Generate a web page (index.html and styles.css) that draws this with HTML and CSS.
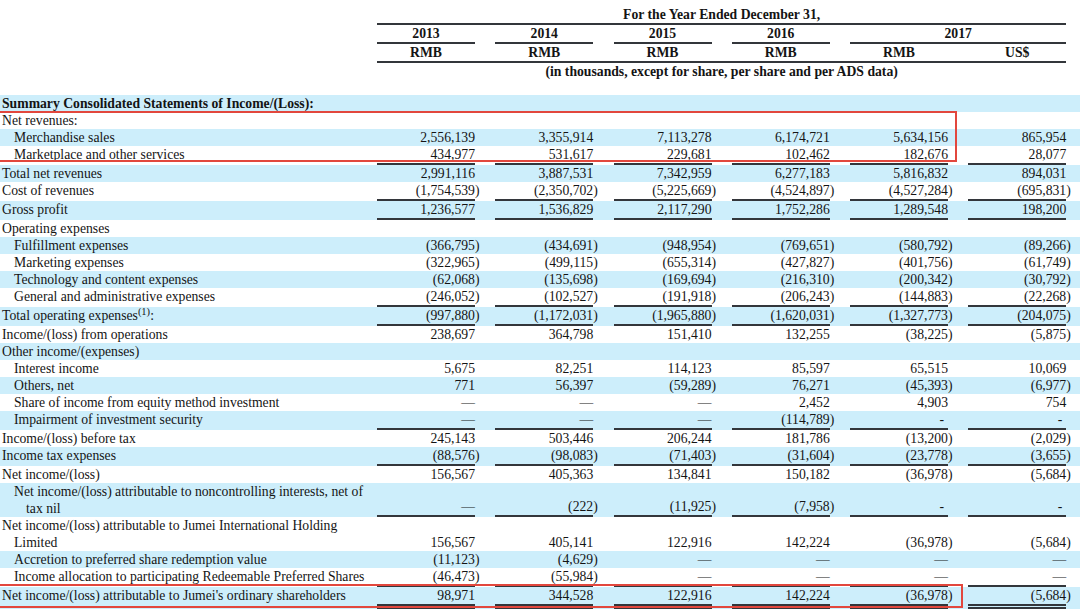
FILE: index.html
```html
<!DOCTYPE html>
<html>
<head>
<meta charset="utf-8">
<link rel="stylesheet" href="styles.css">
</head>
<body>
<div class="page">
  <div class="head">
    <div class="hrow"><div class="c title">For the Year Ended December 31,</div></div>
    <div class="hrow years">
      <div class="c first">2013</div><div class="c">2014</div><div class="c">2015</div><div class="c">2016</div><div class="c y17">2017</div>
    </div>
    <div class="hrow cur">
      <div class="c first">RMB</div><div class="c">RMB</div><div class="c">RMB</div><div class="c">RMB</div><div class="c">RMB</div><div class="c">US$</div>
    </div>
    <div class="hrow"><div class="c title note">(in thousands, except for share, per share and per ADS data)</div></div>
  </div>

  <div class="body">
    <div class="row b"><div class="lab bold">Summary Consolidated Statements of Income/(Loss):</div></div>
    <div class="grp">
      <div class="row"><div class="lab">Net revenues:</div></div>
      <div class="row b"><div class="lab l1">Merchandise sales</div><div class="v">2,556,139</div><div class="v">3,355,914</div><div class="v">7,113,278</div><div class="v">6,174,721</div><div class="v">5,634,156</div><div class="v">865,954</div></div>
      <div class="row ul"><div class="lab l1">Marketplace and other services</div><div class="v">434,977</div><div class="v">531,617</div><div class="v">229,681</div><div class="v">102,462</div><div class="v">182,676</div><div class="v">28,077</div></div>
      <div class="redbox box1"></div>
    </div>
    <div class="row b"><div class="lab">Total net revenues</div><div class="v">2,991,116</div><div class="v">3,887,531</div><div class="v">7,342,959</div><div class="v">6,277,183</div><div class="v">5,816,832</div><div class="v">894,031</div></div>
    <div class="row ul"><div class="lab">Cost of revenues</div><div class="v"><span class="p">(1,754,539)</span></div><div class="v"><span class="p">(2,350,702)</span></div><div class="v"><span class="p">(5,225,669)</span></div><div class="v"><span class="p">(4,524,897)</span></div><div class="v"><span class="p">(4,527,284)</span></div><div class="v"><span class="p">(695,831)</span></div></div>
    <div class="row b ul"><div class="lab">Gross profit</div><div class="v">1,236,577</div><div class="v">1,536,829</div><div class="v">2,117,290</div><div class="v">1,752,286</div><div class="v">1,289,548</div><div class="v">198,200</div></div>
    <div class="row"><div class="lab">Operating expenses</div></div>
    <div class="row b"><div class="lab l1">Fulfillment expenses</div><div class="v"><span class="p">(366,795)</span></div><div class="v"><span class="p">(434,691)</span></div><div class="v"><span class="p">(948,954)</span></div><div class="v"><span class="p">(769,651)</span></div><div class="v"><span class="p">(580,792)</span></div><div class="v"><span class="p">(89,266)</span></div></div>
    <div class="row"><div class="lab l1">Marketing expenses</div><div class="v"><span class="p">(322,965)</span></div><div class="v"><span class="p">(499,115)</span></div><div class="v"><span class="p">(655,314)</span></div><div class="v"><span class="p">(427,827)</span></div><div class="v"><span class="p">(401,756)</span></div><div class="v"><span class="p">(61,749)</span></div></div>
    <div class="row b"><div class="lab l1">Technology and content expenses</div><div class="v"><span class="p">(62,068)</span></div><div class="v"><span class="p">(135,698)</span></div><div class="v"><span class="p">(169,694)</span></div><div class="v"><span class="p">(216,310)</span></div><div class="v"><span class="p">(200,342)</span></div><div class="v"><span class="p">(30,792)</span></div></div>
    <div class="row ul"><div class="lab l1">General and administrative expenses</div><div class="v"><span class="p">(246,052)</span></div><div class="v"><span class="p">(102,527)</span></div><div class="v"><span class="p">(191,918)</span></div><div class="v"><span class="p">(206,243)</span></div><div class="v"><span class="p">(144,883)</span></div><div class="v"><span class="p">(22,268)</span></div></div>
    <div class="row b ul"><div class="lab">Total operating expenses<sup class="fn">(1)</sup>:</div><div class="v"><span class="p">(997,880)</span></div><div class="v"><span class="p">(1,172,031)</span></div><div class="v"><span class="p">(1,965,880)</span></div><div class="v"><span class="p">(1,620,031)</span></div><div class="v"><span class="p">(1,327,773)</span></div><div class="v"><span class="p">(204,075)</span></div></div>
    <div class="row"><div class="lab">Income/(loss) from operations</div><div class="v">238,697</div><div class="v">364,798</div><div class="v">151,410</div><div class="v">132,255</div><div class="v"><span class="p">(38,225)</span></div><div class="v"><span class="p">(5,875)</span></div></div>
    <div class="row b"><div class="lab">Other income/(expenses)</div></div>
    <div class="row"><div class="lab l1">Interest income</div><div class="v">5,675</div><div class="v">82,251</div><div class="v">114,123</div><div class="v">85,597</div><div class="v">65,515</div><div class="v">10,069</div></div>
    <div class="row b"><div class="lab l1">Others, net</div><div class="v">771</div><div class="v">56,397</div><div class="v"><span class="p">(59,289)</span></div><div class="v">76,271</div><div class="v"><span class="p">(45,393)</span></div><div class="v"><span class="p">(6,977)</span></div></div>
    <div class="row"><div class="lab l1">Share of income from equity method investment</div><div class="v">—</div><div class="v">—</div><div class="v">—</div><div class="v">2,452</div><div class="v">4,903</div><div class="v">754</div></div>
    <div class="row b ul"><div class="lab l1">Impairment of investment security</div><div class="v">—</div><div class="v">—</div><div class="v">—</div><div class="v"><span class="p">(114,789)</span></div><div class="v h">-</div><div class="v h">-</div></div>
    <div class="row"><div class="lab">Income/(loss) before tax</div><div class="v">245,143</div><div class="v">503,446</div><div class="v">206,244</div><div class="v">181,786</div><div class="v"><span class="p">(13,200)</span></div><div class="v"><span class="p">(2,029)</span></div></div>
    <div class="row b ul"><div class="lab">Income tax expenses</div><div class="v"><span class="p">(88,576)</span></div><div class="v"><span class="p">(98,083)</span></div><div class="v"><span class="p">(71,403)</span></div><div class="v"><span class="p">(31,604)</span></div><div class="v"><span class="p">(23,778)</span></div><div class="v"><span class="p">(3,655)</span></div></div>
    <div class="row"><div class="lab">Net income/(loss)</div><div class="v">156,567</div><div class="v">405,363</div><div class="v">134,841</div><div class="v">150,182</div><div class="v"><span class="p">(36,978)</span></div><div class="v"><span class="p">(5,684)</span></div></div>
    <div class="row b ul"><div class="lab l1">Net income/(loss) attributable to noncontrolling interests, net of tax nil</div><div class="v">—</div><div class="v"><span class="p">(222)</span></div><div class="v"><span class="p">(11,925)</span></div><div class="v"><span class="p">(7,958)</span></div><div class="v h">-</div><div class="v h">-</div></div>
    <div class="row"><div class="lab">Net income/(loss) attributable to Jumei International Holding Limited</div><div class="v">156,567</div><div class="v">405,141</div><div class="v">122,916</div><div class="v">142,224</div><div class="v"><span class="p">(36,978)</span></div><div class="v"><span class="p">(5,684)</span></div></div>
    <div class="row b"><div class="lab l1">Accretion to preferred share redemption value</div><div class="v"><span class="p">(11,123)</span></div><div class="v"><span class="p">(4,629)</span></div><div class="v">—</div><div class="v">—</div><div class="v">—</div><div class="v">—</div></div>
    <div class="row ul"><div class="lab l1">Income allocation to participating Redeemable Preferred Shares</div><div class="v"><span class="p">(46,473)</span></div><div class="v"><span class="p">(55,984)</span></div><div class="v">—</div><div class="v">—</div><div class="v">—</div><div class="v">—</div></div>
    <div class="grp">
      <div class="row b dbl"><div class="lab">Net income/(loss) attributable to Jumei's ordinary shareholders</div><div class="v">98,971</div><div class="v">344,528</div><div class="v">122,916</div><div class="v">142,224</div><div class="v"><span class="p">(36,978)</span></div><div class="v"><span class="p">(5,684)</span></div></div>
      <div class="redbox box2"></div>
    </div>
  </div>
</div>
</body>
</html>
```

FILE: styles.css
```css
html, body {
  margin: 0;
  padding: 0;
  background: #ffffff;
}

body {
  font-family: "Liberation Serif", "Times New Roman", serif;
  font-size: 13.7px;
  color: #141414;
  overflow: hidden;
}

.page {
  width: 1080px;
}

/* ---------- header ---------- */
.head {
  padding-top: 6px;
  margin-bottom: 15px;
}

.hrow {
  display: grid;
  grid-template-columns: 377px 98px repeat(5, 118.25px);
  line-height: 17px;
  font-weight: bold;
  text-align: center;
}

.hrow .title {
  grid-column: 2 / 8;
  border-bottom: 2px solid #33363b;
}

.hrow .title.note {
  border-bottom: none;
}

.years .c {
  border-bottom: 2px solid #33363b;
}

.years .c + .c {
  margin-left: 20.25px;
}

.hrow .first {
  grid-column-start: 2;
}

.years .y17 {
  grid-column: 6 / 8;
}

.cur .c {
  border-bottom: 2px solid #33363b;
}

.cur .c + .c {
  padding-left: 20.25px;
}

/* ---------- body rows ---------- */
.row {
  display: grid;
  grid-template-columns: 377px 98px repeat(5, 118.25px);
  line-height: 17px;
}

.row.b {
  background: #cdeefb;
}

.lab {
  padding-left: 14px;
  text-indent: -12px;
  padding-right: 3px;
}

.lab.l1 {
  padding-left: 26px;
}

.lab.bold {
  font-weight: bold;
  white-space: nowrap;
}

.fn {
  font-size: 10.5px;
  line-height: 0;
  vertical-align: 5px;
}

.v {
  text-align: right;
  white-space: nowrap;
  align-self: end;
}

.v + .v {
  margin-left: 20.25px;
}

.v.h {
  padding-right: 4px;
}

.p {
  margin-right: -4.5px;
}

.ul .v {
  border-bottom: 2px solid #33363b;
}

.dbl .v {
  border-bottom: 5px double #33363b;
}

/* ---------- red highlight boxes ---------- */
.grp {
  position: relative;
}

.redbox {
  position: absolute;
  border: 2px solid #e2473d;
  pointer-events: none;
}

.box1 {
  left: -2px;
  top: -1px;
  width: 955px;
  height: 47px;
}

.box2 {
  left: -2px;
  top: -3px;
  width: 961px;
  height: 20px;
}
```
